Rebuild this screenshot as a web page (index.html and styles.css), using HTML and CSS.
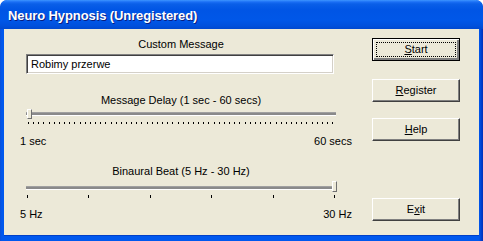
FILE: index.html
```html
<!DOCTYPE html>
<html>
<head>
<meta charset="utf-8">
<link rel="stylesheet" href="styles.css">
</head>
<body>
<div class="window">
  <div class="titlebar"><span class="title">Neuro Hypnosis (Unregistered)</span></div>
  <div class="client">
    <div class="left">
      <div class="label l1">Custom Message</div>
      <div class="edit">Robimy przerwe</div>
      <div class="label l2">Message Delay (1 sec - 60 secs)</div>
      <div class="slider s1">
        <div class="track"></div>
        <div class="thumb thumb-left"></div>
        <div class="ticks ticks-dense">
          <i></i><i></i><i></i><i></i><i></i><i></i><i></i><i></i><i></i><i></i>
          <i></i><i></i><i></i><i></i><i></i><i></i><i></i><i></i><i></i><i></i>
          <i></i><i></i><i></i><i></i><i></i><i></i><i></i><i></i><i></i><i></i>
          <i></i><i></i><i></i><i></i><i></i><i></i><i></i><i></i><i></i><i></i>
          <i></i><i></i><i></i><i></i><i></i><i></i><i></i><i></i><i></i><i></i>
          <i></i><i></i><i></i><i></i><i></i><i></i><i></i><i></i><i></i><i></i>
        </div>
      </div>
      <div class="range r1"><span>1 sec</span><span>60 secs</span></div>
      <div class="label l3">Binaural Beat (5 Hz - 30 Hz)</div>
      <div class="slider s2">
        <div class="track"></div>
        <div class="thumb thumb-right"></div>
        <div class="ticks ticks-sparse">
          <i></i><i></i><i></i><i></i><i></i><i></i>
        </div>
      </div>
      <div class="range r2"><span>5 Hz</span><span>30 Hz</span></div>
    </div>
    <div class="right">
      <div class="btn btn-default"><span class="focus"><u>S</u>tart</span></div>
      <div class="btn b2"><span><u>R</u>egister</span></div>
      <div class="btn b3"><span><u>H</u>elp</span></div>
      <div class="btn b4"><span>E<u>x</u>it</span></div>
    </div>
  </div>
</div>
</body>
</html>
```
FILE: styles.css
```css
html, body {
  margin: 0;
  padding: 0;
  background: #ffffff;
}
.window {
  width: 483px;
  height: 241px;
  box-sizing: border-box;
  padding: 0 4px 5px 4px;
  background: linear-gradient(to right, #0a4fd8 0, #0058ee 2px, #0058ee 479px, #0030b8 483px);
  border-radius: 7px 7px 0 0;
  display: flex;
  flex-direction: column;
  font-family: "Liberation Sans", Arial, sans-serif;
  font-size: 11px;
  color: #000;
  overflow: hidden;
}
.titlebar {
  height: 29px;
  margin: 0 -4px;
  padding-left: 8px;
  display: flex;
  align-items: center;
  border-radius: 7px 7px 0 0;
  background: linear-gradient(to bottom, #3d95ff 0, #1a6ef5 2px, #0a5fe8 4px, #0055e5 10px, #0057e8 20px, #0050dc 26px, #0048cf 29px);
}
.title {
  color: #fff;
  font-weight: bold;
  font-size: 13px;
  letter-spacing: -0.1px;
  text-shadow: 1px 1px 0 #0a1e80;
  margin-top: 1px;
}
.client {
  flex: 1;
  background: #ece9d8;
  display: flex;
  border-bottom: 1px solid #0040c8;
}
.left {
  width: 332px;
  margin-left: 16px;
  display: flex;
  flex-direction: column;
}
.label {
  width: 310px;
  margin-left: 6px;
  text-align: center;
  line-height: 13px;
  height: 13px;
}
.l1 { margin-top: 9px; }
.edit {
  margin-top: 3px;
  margin-left: 6px;
  width: 308px;
  height: 20px;
  box-sizing: border-box;
  background: #fff;
  border-top: 1px solid #808080;
  border-left: 1px solid #808080;
  border-right: 1px solid #ffffff;
  border-bottom: 1px solid #ffffff;
  box-shadow: inset 1px 1px 0 #404040, inset -1px -1px 0 #d4d0c8;
  padding: 3px 0 0 4px;
  line-height: 13px;
}
.l2 { margin-top: 20px; }
.slider {
  position: relative;
  margin-left: 6px;
  width: 310px;
  height: 20px;
}
.s1 { margin-top: 0; }
.track {
  position: absolute;
  left: 0;
  right: 0;
  top: 5px;
  height: 2px;
  border-top: 1px solid #a0a0a0;
  border-bottom: 1px solid #ffffff;
  background: #8a8a8a;
}
.thumb {
  position: absolute;
  width: 3px;
  background: #ece9d8;
  border-left: 1px solid #ffffff;
  border-right: 1px solid #707070;
  border-top: 1px solid #ffffff;
  border-bottom: 1px solid #707070;
}
.thumb-left {
  left: 1px;
  top: 2px;
  height: 8px;
}
.thumb-right {
  left: 306px;
  top: 0;
  height: 9px;
}
.ticks {
  position: absolute;
  top: 15px;
  display: flex;
  justify-content: space-between;
}
.ticks i {
  display: block;
  width: 1px;
  height: 2px;
  background: #000;
}
.ticks-dense {
  left: 2px;
  width: 306px;
}
.ticks-sparse {
  left: 1px;
  width: 308px;
  top: 14px;
}
.ticks-sparse i { height: 3px; }
.range {
  display: flex;
  justify-content: space-between;
  line-height: 13px;
  height: 13px;
}
.r1 { margin-top: 8px; }
.l3 { margin-top: 17px; }
.s2 { margin-top: 3px; }
.r2 { margin-top: 7px; }
.right {
  margin-left: 20px;
  display: flex;
  flex-direction: column;
}
.btn {
  width: 88px;
  height: 23px;
  box-sizing: border-box;
  background: #ece9d8;
  border-top: 1px solid #ffffff;
  border-left: 1px solid #ffffff;
  border-right: 1px solid #404040;
  border-bottom: 1px solid #404040;
  box-shadow: inset -1px -1px 0 #808080;
  display: flex;
  align-items: center;
  justify-content: center;
  line-height: 13px;
}
.btn-default {
  margin-top: 9px;
  border: 1px solid #000;
  box-shadow: inset 1px 1px 0 #ffffff, inset -2px -2px 0 #808080;
  padding: 3px;
}
.focus {
  flex: 1;
  align-self: stretch;
  border: 1px dotted #000;
  display: flex;
  align-items: center;
  justify-content: center;
}
.b2 { margin-top: 18px; }
.b3 { margin-top: 16px; }
.b4 { margin-top: 57px; }
```
